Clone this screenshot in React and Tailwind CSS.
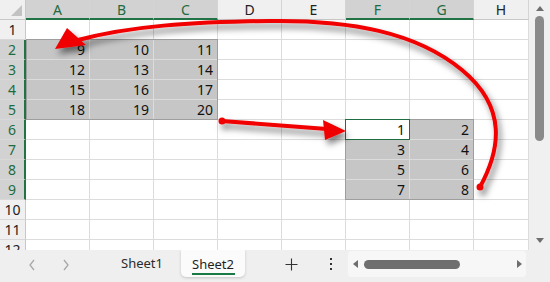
import React from 'react';

const COLS = ['A', 'B', 'C', 'D', 'E', 'F', 'G', 'H'];
const ROWS = [1, 2, 3, 4, 5, 6, 7, 8, 9, 10, 11, 12];

const VALUES = {
  2: { A: 9, B: 10, C: 11 },
  3: { A: 12, B: 13, C: 14 },
  4: { A: 15, B: 16, C: 17 },
  5: { A: 18, B: 19, C: 20 },
  6: { F: 1, G: 2 },
  7: { F: 3, G: 4 },
  8: { F: 5, G: 6 },
  9: { F: 7, G: 8 },
};

const selCols = ['A', 'B', 'C', 'F', 'G'];

const isSelected = (r, c) =>
  (r >= 2 && r <= 5 && ['A', 'B', 'C'].includes(c)) ||
  (r >= 6 && r <= 9 && ['F', 'G'].includes(c));

const ColHeader = ({ col }) => {
  const sel = selCols.includes(col);
  const width = col === 'H' ? 'w-[55px]' : 'w-[64px]';
  return (
    <div
      className={`${width} h-[20px] shrink-0 flex items-center justify-center text-[14px] border-r border-r-[#d4d4d4] ${
        sel
          ? 'bg-[#d2d2d2] text-[#1d6b40] border-b-2 border-b-[#217346]'
          : 'bg-[#f0f0f0] text-[#222] border-b border-b-[#c8c8c8]'
      }`}
    >
      {col}
    </div>
  );
};

const Cell = ({ row, col }) => {
  const sel = isSelected(row, col);
  const active = row === 6 && col === 'F';
  const width = col === 'H' ? 'w-[55px]' : 'w-[64px]';
  const value = VALUES[row]?.[col];
  return (
    <div
      className={`${width} h-[20px] shrink-0 flex items-center justify-end pr-[4px] text-[14px] text-[#111] border-r border-b border-[#dcdcdc] ${
        sel && !active ? 'bg-[#c6c6c6] border-[#d8d8d8]' : 'bg-white'
      }`}
    >
      {value}
    </div>
  );
};

const Row = ({ row }) => {
  const sel = row >= 2 && row <= 9;
  return (
    <div className="flex h-[20px]">
      <div
        className={`w-[26px] h-[20px] shrink-0 flex items-center justify-center text-[14px] border-b border-b-[#d8d8d8] ${
          sel
            ? 'bg-[#d2d2d2] text-[#1d6b40] border-r-2 border-r-[#217346]'
            : 'bg-[#f0f0f0] text-[#222] border-r border-r-[#c8c8c8]'
        }`}
      >
        {row}
      </div>
      {COLS.map((c) => (
        <Cell key={c} row={row} col={c} />
      ))}
    </div>
  );
};

const Arrows = () => (
  <svg
    className="absolute left-0 top-0 pointer-events-none"
    width="550"
    height="282"
    viewBox="0 0 550 282"
  >
    <defs>
      <filter id="shadow" x="-20%" y="-20%" width="140%" height="140%">
        <feDropShadow dx="3" dy="5" stdDeviation="3" floodColor="#000" floodOpacity="0.5" />
      </filter>
    </defs>
    <g filter="url(#shadow)" fill="#f00000" stroke="#f00000">
      {/* big curve G9 -> A2 */}
      <path
        d="M 480 187 C 500 150, 508 108, 462 70 S 350 20, 270 21 S 130 26, 78 40"
        fill="none"
        strokeWidth="4"
        strokeLinecap="round"
      />
      <polygon points="55,49 67,28 86,45" stroke="none" />
      <circle cx="480" cy="187" r="3.5" stroke="none" />
      {/* short arrow C5 -> F6 */}
      <path d="M 222 121 L 327 129" fill="none" strokeWidth="4" strokeLinecap="round" />
      <polygon points="346,131 323,120 325,140" stroke="none" />
      <circle cx="222" cy="121" r="3.5" stroke="none" />
    </g>
  </svg>
);

const Triangle = ({ dir }) => {
  const pts = {
    up: '0,5 4,0 8,5',
    down: '0,0 8,0 4,5',
    left: '5,0 5,8 0,4',
    right: '0,0 0,8 5,4',
  }[dir];
  const size = dir === 'up' || dir === 'down' ? { w: 8, h: 5 } : { w: 5, h: 8 };
  return (
    <svg width={size.w} height={size.h} viewBox={`0 0 ${size.w} ${size.h}`}>
      <polygon points={pts} fill="#6e6e6e" />
    </svg>
  );
};

const Chevron = ({ left }) => (
  <svg width="8" height="12" viewBox="0 0 8 12">
    <polyline
      points={left ? '6,1 2,6 6,11' : '2,1 6,6 2,11'}
      fill="none"
      stroke="#a8a8a8"
      strokeWidth="1.3"
    />
  </svg>
);

export default function App() {
  return (
    <div className="relative w-[550px] h-[282px] overflow-hidden bg-white font-['Noto_Sans',sans-serif]">
      <div className="flex h-[250px]">
        <div className="relative w-[529px] h-[250px] overflow-hidden">
          <div className="flex h-[20px]">
            <div className="relative w-[26px] h-[20px] shrink-0 bg-[#f0f0f0] border-r border-b border-[#c8c8c8]">
              <svg className="absolute left-0 top-0" width="26" height="20" viewBox="0 0 26 20">
                <polygon points="22,5 22,16 11,16" fill="#c2c2c2" />
              </svg>
            </div>
            {COLS.map((c) => (
              <ColHeader key={c} col={c} />
            ))}
          </div>
          {ROWS.map((r) => (
            <Row key={r} row={r} />
          ))}

          {/* selection outlines */}
          <div className="absolute left-[26px] top-[39px] w-[192px] h-[81px] border border-[#9e9e9e] pointer-events-none" />
          <div className="absolute left-[345px] top-[119px] w-[129px] h-[81px] border border-[#9e9e9e] pointer-events-none" />
          <div className="absolute left-[345px] top-[119px] w-[65px] h-[21px] border-[1.5px] border-[#1f6e43] pointer-events-none" />
        </div>

        {/* vertical scrollbar */}
        <div className="w-[21px] h-[250px] bg-[#f0f0f0] flex flex-col items-center">
          <div className="h-[16px] flex items-center">
            <Triangle dir="up" />
          </div>
          <div className="w-[9px] h-[125px] rounded-full bg-[#8a8a8a]" />
          <div className="flex-1" />
          <div className="h-[14px] flex items-start pt-[2px]">
            <Triangle dir="down" />
          </div>
        </div>
      </div>

      {/* sheet tab bar */}
      <div className="flex items-start h-[32px] bg-[#efefef] text-[13px] text-[#2b2b2b]">
        <div className="w-[22px] shrink-0" />
        <div className="w-[20px] h-[30px] flex items-center justify-center">
          <Chevron left />
        </div>
        <div className="w-[14px] shrink-0" />
        <div className="w-[20px] h-[30px] flex items-center justify-center">
          <Chevron />
        </div>
        <div className="w-[27px] shrink-0" />
        <div className="w-[78px] h-[28px] flex items-center justify-center">Sheet1</div>
        <div className="w-[64px] h-[27px] flex flex-col items-center pt-[6px] bg-[#fbfbfb] rounded-b-[5px] shadow-[0_1px_3px_rgba(0,0,0,0.18)]">
          <span className="leading-[16px] text-[#1f1f1f]">Sheet2</span>
          <div className="mt-[1px] w-[43px] h-[2px] bg-[#1a7a45]" />
        </div>
        <div className="w-[31px] shrink-0" />
        <div className="w-[30px] h-[28px] flex items-center justify-center">
          <svg width="13" height="13" viewBox="0 0 13 13">
            <path d="M6.5 0.5 V12.5 M0.5 6.5 H12.5" stroke="#333" strokeWidth="1.1" />
          </svg>
        </div>
        <div className="w-[10px] shrink-0" />
        <div className="w-[30px] h-[28px] flex flex-col items-center justify-center gap-[3px]">
          <div className="w-[2px] h-[2px] bg-[#333]" />
          <div className="w-[2px] h-[2px] bg-[#333]" />
          <div className="w-[2px] h-[2px] bg-[#333]" />
        </div>
        <div className="w-[2px] shrink-0" />
        <div className="mt-[1px] w-[178px] h-[26px] flex items-center bg-[#f7f7f7] rounded-[4px] pl-[5px] pr-[4px]">
          <Triangle dir="left" />
          <div className="ml-[6px] w-[96px] h-[9px] rounded-full bg-[#6f6f6f]" />
          <div className="flex-1" />
          <Triangle dir="right" />
        </div>
      </div>

      <Arrows />
    </div>
  );
}
